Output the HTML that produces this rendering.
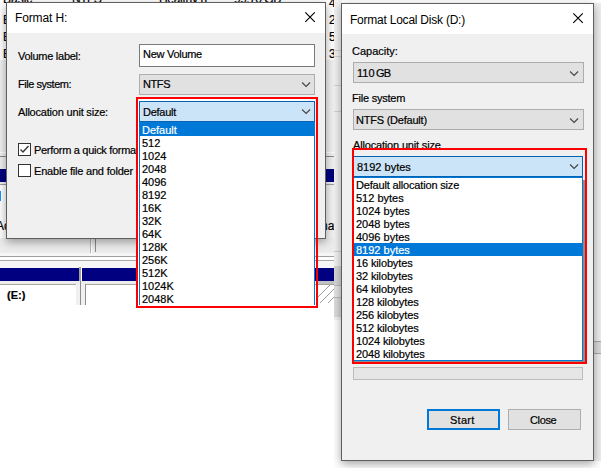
<!DOCTYPE html>
<html>
<head>
<meta charset="utf-8">
<title>Format</title>
<style>
html,body{margin:0;padding:0;background:#fff;}
body{width:603px;height:471px;position:relative;overflow:hidden;font-family:"Liberation Sans",sans-serif;font-size:11px;color:#000;}
.abs{position:absolute;}
.t{position:absolute;white-space:pre;line-height:13px;height:13px;}
.pane{position:absolute;overflow:hidden;}
.dlg{position:absolute;background:#f0f0f0;border:1px solid #5f5f5f;box-sizing:border-box;box-shadow:0 3px 9px 0 rgba(0,0,0,.36);}
.title{position:absolute;left:0;top:0;right:0;background:#fff;}
.t,.row span{-webkit-text-stroke:0.2px currentColor;}
.ttl{font-size:12px;line-height:14px;height:14px;-webkit-text-stroke:0;}
.combo{position:absolute;box-sizing:border-box;background:#e1e1e1;border:1px solid #adadad;}
.combo.open{background:#cce4f7;border-color:#0078d7;}
.list{position:absolute;box-sizing:border-box;background:#fff;border:1px solid #0078d7;}
.row{position:absolute;left:0;right:0;height:13px;}
.row.sel{background:#0078d7;color:#fff;}
.row span{position:absolute;white-space:pre;line-height:13px;}
.btn{position:absolute;box-sizing:border-box;background:#e1e1e1;border:1px solid #adadad;}
.red{position:absolute;box-sizing:border-box;border:2px solid #ff0000;}
svg{position:absolute;overflow:visible;}
</style>
</head>
<body>

<!-- ================= LEFT PANE ================= -->
<div class="pane" id="lp" style="left:0;top:0;width:334px;height:305px;background:#fff;">
  <!-- background app fragments -->
  <div class="abs" style="left:0;top:0;width:334px;height:60px;background:#fff;"></div>
  <div class="t" style="left:3px;top:-7px;font-size:12px;">Basic</div>
  <div class="t" style="left:3px;top:14px;font-size:12px;">Basic</div>
  <div class="t" style="left:3px;top:31px;font-size:12px;">Basic</div>
  <div class="t" style="left:3px;top:48px;font-size:12px;">Basic</div>
  <div class="t" style="left:72px;top:-7px;font-size:12px;letter-spacing:-0.5px;">NTFS</div>
  <div class="t" style="left:159px;top:-7px;font-size:12px;letter-spacing:-0.3px;">Healthy (P</div>
  <div class="t" style="left:234px;top:-7px;font-size:12px;letter-spacing:-0.5px;">99.70 GB</div>
  <div class="t" style="left:329px;top:-3px;font-size:12px;">4</div>
  <div class="t" style="left:329px;top:14px;font-size:12px;">2</div>
  <div class="t" style="left:329px;top:31px;font-size:12px;">5</div>
  <div class="t" style="left:329px;top:48px;font-size:12px;">3</div>
  <!-- lower app area -->
  <div class="abs" style="left:0;top:60px;width:334px;height:196px;background:#f0f0f0;"></div>
  <div class="abs" style="left:0;top:152px;width:334px;height:1px;background:#fff;"></div>
  <div class="abs" style="left:0;top:156px;width:334px;height:1px;background:#888;"></div>
  <div class="abs" style="left:0;top:169px;width:334px;height:13px;background:#000080;"></div>
  <div class="abs" style="left:0;top:184px;width:334px;height:1px;background:#a0a0a0;"></div>
  <div class="abs" style="left:0;top:185px;width:334px;height:53px;background:#fff;"></div>
  <div class="abs" style="left:0;top:191px;width:1px;height:10px;background:#1e90ff;"></div>
  <div class="t" style="left:-4px;top:220px;font-size:12px;">Ac</div>
  <div class="abs" style="left:326px;top:185px;width:8px;height:53px;background:#f2f2f2;"></div>
  <div class="t" style="left:321px;top:220px;font-size:12px;">na</div>
  <!-- below dialog -->
  <div class="abs" style="left:0;top:238px;width:334px;height:17px;background:#ececec;"></div>
  <div class="abs" style="left:90px;top:238px;width:1px;height:17px;background:#b4b4b4;"></div>
  <div class="abs" style="left:91px;top:238px;width:1px;height:17px;background:#fff;"></div>
  <div class="abs" style="left:95px;top:239px;width:1px;height:13px;background:#8a8a8a;"></div>
  <div class="abs" style="left:0;top:253px;width:334px;height:15px;background:#f6f6f6;"></div>
  <div class="abs" style="left:0;top:256px;width:334px;height:1px;background:#a0a0a0;"></div>
  <div class="abs" style="left:0;top:257px;width:334px;height:3px;background:#fff;"></div>
  <div class="abs" style="left:0;top:260px;width:334px;height:1px;background:#a8a8a8;"></div>
  <div class="abs" style="left:0;top:268px;width:334px;height:13px;background:#000080;"></div>
  <div class="abs" style="left:0;top:281px;width:334px;height:24px;background:#fff;"></div>
  <div class="abs" style="left:0;top:281px;width:334px;height:3px;background:#ececec;"></div>
  <div class="abs" style="left:0;top:284px;width:76px;height:1px;background:#a6a6a6;"></div>
  <div class="abs" style="left:76px;top:284px;width:9px;height:21px;background:#f0f0f0;"></div>
  <div class="abs" style="left:79px;top:267px;width:2px;height:14px;background:#a0a0a0;"></div>
  <div class="abs" style="left:81px;top:267px;width:1px;height:14px;background:#fff;"></div>
  <div class="abs" style="left:80px;top:281px;width:1px;height:24px;background:#8e8e8e;"></div>
  <div class="abs" style="left:85px;top:284px;width:249px;height:1px;background:#a6a6a6;"></div>
  <div class="abs" style="left:85px;top:284px;width:1px;height:21px;background:#8e8e8e;"></div>
  <div class="t" style="left:7px;top:289px;font-weight:bold;font-size:11px;">(E:)</div>
  <div class="abs" style="left:318px;top:281px;width:16px;height:3px;background:#c0c0c0;"></div>
  <!-- hatch right -->
  <svg style="left:318px;top:285px;" width="16" height="20"><g stroke="#9a9a9a" stroke-width="1"><line x1="0" y1="12" x2="12" y2="0"/><line x1="2" y1="18" x2="16" y2="4"/><line x1="10" y1="18" x2="16" y2="12"/></g></svg>

  <!-- the dialog -->
  <div class="dlg" style="left:6px;top:2px;width:320px;height:237px;">
    <div class="title" style="height:30px;"></div>
    <div class="t ttl" id="lt" style="left:8px;top:8px;letter-spacing:-0.13px;">Format H:</div>
    <svg style="left:298px;top:9px;" width="10" height="10"><path d="M0.3 0.3 L9.8 9.8 M9.8 0.3 L0.3 9.8" stroke="#000" stroke-width="1.15" fill="none"/></svg>

    <div class="t" id="l1" style="left:11px;top:47px;letter-spacing:-0.27px;">Volume label:</div>
    <div class="t" id="l2" style="left:11px;top:75px;letter-spacing:-0.46px;">File system:</div>
    <div class="t" id="l3" style="left:11px;top:103px;letter-spacing:-0.2px;">Allocation unit size:</div>

    <div class="abs" style="left:132px;top:41px;width:176px;height:23px;box-sizing:border-box;background:#fff;border:1px solid #7a7a7a;"></div>
    <div class="t" id="l4" style="left:136px;top:45px;letter-spacing:-0.28px;">New Volume</div>

    <div class="combo" style="left:132px;top:71px;width:176px;height:21px;"></div>
    <div class="t" style="left:136px;top:75px;letter-spacing:-0.4px;">NTFS</div>
    <svg style="left:295px;top:79px;" width="9" height="6"><path d="M0.1 0.5 L4.1 4.5 L8.1 0.5" stroke="#444" stroke-width="1.1" fill="none"/></svg>

    <!-- checkboxes -->
    <div class="abs" style="left:11px;top:140px;width:13px;height:13px;box-sizing:border-box;background:#fff;border:1px solid #333;"></div>
    <svg style="left:11px;top:140px;" width="13" height="13"><path d="M2.5 6.5 L5 9 L10.5 3" stroke="#3a3a3a" stroke-width="1.4" fill="none"/></svg>
    <div class="t" id="l5" style="left:27px;top:141px;letter-spacing:-0.3px;">Perform a quick format</div>
    <div class="abs" style="left:11px;top:161px;width:13px;height:13px;box-sizing:border-box;background:#fff;border:1px solid #333;"></div>
    <div class="t" id="l6" style="left:27px;top:162px;letter-spacing:-0.2px;">Enable file and folder compression</div>
  </div>

  <!-- open combo + list (inside red) -->
  <div class="abs" style="left:138px;top:99px;width:177px;height:207px;background:#fff;"></div>
  <div class="combo open" style="left:139px;top:101px;width:176px;height:21px;border-color:#0a64b4;"></div>
  <div class="t" style="left:143px;top:106px;letter-spacing:-0.25px;">Default</div>
  <svg style="left:302px;top:109px;" width="9" height="6"><path d="M0.1 0.5 L4.1 4.5 L8.1 0.5" stroke="#444" stroke-width="1.1" fill="none"/></svg>
  <div class="list" id="ll" style="left:139px;top:122px;width:176px;height:184px;">
    <div class="row sel" style="top:0;"><span style="left:2px;top:1px;">Default</span></div>
    <div class="row" style="top:13px;"><span style="left:2px;top:1px;">512</span></div>
    <div class="row" style="top:26px;"><span style="left:2px;top:1px;">1024</span></div>
    <div class="row" style="top:39px;"><span style="left:2px;top:1px;">2048</span></div>
    <div class="row" style="top:52px;"><span style="left:2px;top:1px;">4096</span></div>
    <div class="row" style="top:65px;"><span style="left:2px;top:1px;">8192</span></div>
    <div class="row" style="top:78px;"><span style="left:2px;top:1px;">16K</span></div>
    <div class="row" style="top:91px;"><span style="left:2px;top:1px;">32K</span></div>
    <div class="row" style="top:104px;"><span style="left:2px;top:1px;">64K</span></div>
    <div class="row" style="top:117px;"><span style="left:2px;top:1px;">128K</span></div>
    <div class="row" style="top:130px;"><span style="left:2px;top:1px;">256K</span></div>
    <div class="row" style="top:143px;"><span style="left:2px;top:1px;">512K</span></div>
    <div class="row" style="top:156px;"><span style="left:2px;top:1px;">1024K</span></div>
    <div class="row" style="top:169px;"><span style="left:2px;top:1px;">2048K</span></div>
  </div>
</div>
<div class="red" style="left:136px;top:97px;width:182px;height:211px;"></div>

<!-- ================= RIGHT PANE ================= -->
<div class="pane" id="rp" style="left:334px;top:0;width:267px;height:468px;background:#fff;">
  <div class="abs" style="left:0;top:0;width:8px;height:320px;background:#f2f2f2;"></div>
  <div class="abs" style="left:0;top:251px;width:8px;height:1px;background:#cfcfcf;"></div>
  <div class="abs" style="left:0;top:50px;width:8px;height:1px;background:#d4d4d4;"></div>
  <div class="abs" style="left:0;top:56px;width:8px;height:1px;background:#d4d4d4;"></div>
  <div class="abs" style="left:0;top:85px;width:8px;height:1px;background:#d4d4d4;"></div>
  <div class="abs" style="left:0;top:111px;width:8px;height:1px;background:#d4d4d4;"></div>
  <div class="abs" style="left:0;top:266px;width:8px;height:19px;background:#d6d6d6;"></div>
  <div class="abs" style="left:0;top:285px;width:8px;height:12px;background:#e4e4e4;"></div>
  <div class="abs" style="left:0;top:285px;width:8px;height:1px;background:#bdbdbd;"></div>
  <div class="abs" style="left:0;top:297px;width:8px;height:20px;background:#dcdcdc;"></div>
  <div class="abs" style="left:0;top:297px;width:8px;height:1px;background:#bdbdbd;"></div>
  <div class="abs" style="left:260px;top:3px;width:8px;height:458px;background:#eeeeee;"></div>
  <div class="abs" style="left:260px;top:341px;width:8px;height:13px;background:#dadada;border-top:1px solid #a8a8a8;border-bottom:1px solid #a8a8a8;box-sizing:border-box;"></div>
  <div class="dlg" style="left:7px;top:3px;width:253px;height:458px;">
    <div class="title" style="height:30px;"></div>
    <div class="t ttl" id="rt" style="left:8px;top:9px;letter-spacing:-0.23px;">Format Local Disk (D:)</div>
    <svg style="left:231px;top:9px;" width="10" height="10"><path d="M0.3 0.3 L9.8 9.8 M9.8 0.3 L0.3 9.8" stroke="#000" stroke-width="1.15" fill="none"/></svg>

    <div class="t" id="r1" style="left:10px;top:41px;">Capacity:</div>
    <div class="combo" style="left:11px;top:58px;width:231px;height:21px;"></div>
    <div class="t" id="r2" style="left:15px;top:63px;">110 <span style="letter-spacing:-1px;margin-left:-1.5px;">GB</span></div>
    <svg style="left:228px;top:67px;" width="9" height="6"><path d="M0.1 0.5 L4.1 4.5 L8.1 0.5" stroke="#444" stroke-width="1.1" fill="none"/></svg>

    <div class="t" id="r3" style="left:10px;top:88px;letter-spacing:-0.22px;">File system</div>
    <div class="combo" style="left:11px;top:105px;width:231px;height:21px;"></div>
    <div class="t" id="r4" style="left:14px;top:110px;letter-spacing:-0.22px;">NTFS (Default)</div>
    <svg style="left:228px;top:114px;" width="9" height="6"><path d="M0.1 0.5 L4.1 4.5 L8.1 0.5" stroke="#444" stroke-width="1.1" fill="none"/></svg>

    <div class="t" id="r5" style="left:11px;top:135px;letter-spacing:-0.17px;">Allocation unit size</div>

    <div class="abs" style="left:11px;top:363px;width:230px;height:13px;box-sizing:border-box;background:#e6e6e6;border:1px solid #bcbcbc;"></div>

    <div class="btn" style="left:85px;top:405px;width:73px;height:21px;border:2px solid #0078d7;"></div>
    <div class="t" id="r6" style="left:108px;top:410px;letter-spacing:0.25px;">Start</div>
    <div class="btn" style="left:166px;top:405px;width:73px;height:21px;"></div>
    <div class="t" id="r7" style="left:188px;top:410px;letter-spacing:-0.35px;">Close</div>
  </div>

  <!-- open combo + list -->
  <div class="abs" style="left:20px;top:150px;width:231px;height:212px;background:#f0f0f0;"></div>
  <div class="combo open" style="left:19px;top:156px;width:230px;height:21px;border-color:#0063b1;"></div>
  <div class="t" id="r8" style="left:23px;top:161px;">8192 bytes</div>
  <svg style="left:236px;top:164px;" width="9" height="6"><path d="M0.1 0.5 L4.1 4.5 L8.1 0.5" stroke="#444" stroke-width="1.1" fill="none"/></svg>
  <div class="abs" style="left:249px;top:180px;width:2px;height:182px;background:#8c8c8c;"></div>
  <div class="abs" style="left:20px;top:361px;width:231px;height:1px;background:#8c8c8c;"></div>
  <div class="list" id="rl" style="left:19px;top:177px;width:230px;height:184px;">
    <div class="row" style="top:0px;"><span style="left:2px;top:1px;letter-spacing:-0.17px;">Default allocation size</span></div>
    <div class="row" style="top:13px;"><span style="left:2px;top:1px;">512 bytes</span></div>
    <div class="row" style="top:26px;"><span style="left:2px;top:1px;">1024 bytes</span></div>
    <div class="row" style="top:39px;"><span style="left:2px;top:1px;">2048 bytes</span></div>
    <div class="row" style="top:52px;"><span style="left:2px;top:1px;">4096 bytes</span></div>
    <div class="row sel" style="top:65px;"><span style="left:2px;top:1px;">8192 bytes</span></div>
    <div class="row" style="top:78px;"><span style="left:2px;top:1px;letter-spacing:-0.13px;">16 kilobytes</span></div>
    <div class="row" style="top:91px;"><span style="left:2px;top:1px;letter-spacing:-0.13px;">32 kilobytes</span></div>
    <div class="row" style="top:104px;"><span style="left:2px;top:1px;letter-spacing:-0.13px;">64 kilobytes</span></div>
    <div class="row" style="top:117px;"><span style="left:2px;top:1px;letter-spacing:-0.13px;">128 kilobytes</span></div>
    <div class="row" style="top:130px;"><span style="left:2px;top:1px;letter-spacing:-0.13px;">256 kilobytes</span></div>
    <div class="row" style="top:143px;"><span style="left:2px;top:1px;letter-spacing:-0.13px;">512 kilobytes</span></div>
    <div class="row" style="top:156px;"><span style="left:2px;top:1px;letter-spacing:-0.13px;">1024 kilobytes</span></div>
    <div class="row" style="top:169px;"><span style="left:2px;top:1px;letter-spacing:-0.13px;">2048 kilobytes</span></div>
  </div>
</div>
<div class="red" style="left:352px;top:148px;width:235px;height:216px;"></div>

</body>
</html>
